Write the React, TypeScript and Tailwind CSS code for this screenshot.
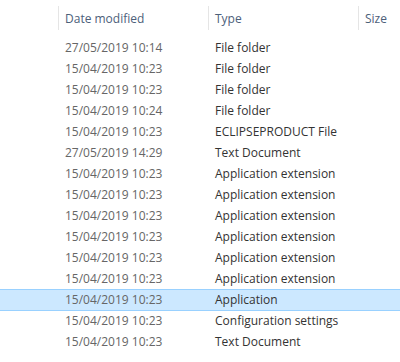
import { FC } from 'react';

interface FileRow {
  date: string;
  type: string;
  selected?: boolean;
}

const rows: FileRow[] = [
  { date: '27/05/2019 10:14', type: 'File folder' },
  { date: '15/04/2019 10:23', type: 'File folder' },
  { date: '15/04/2019 10:23', type: 'File folder' },
  { date: '15/04/2019 10:24', type: 'File folder' },
  { date: '15/04/2019 10:23', type: 'ECLIPSEPRODUCT File' },
  { date: '27/05/2019 14:29', type: 'Text Document' },
  { date: '15/04/2019 10:23', type: 'Application extension' },
  { date: '15/04/2019 10:23', type: 'Application extension' },
  { date: '15/04/2019 10:23', type: 'Application extension' },
  { date: '15/04/2019 10:23', type: 'Application extension' },
  { date: '15/04/2019 10:23', type: 'Application extension' },
  { date: '15/04/2019 10:23', type: 'Application extension' },
  { date: '15/04/2019 10:23', type: 'Application', selected: true },
  { date: '15/04/2019 10:23', type: 'Configuration settings' },
  { date: '15/04/2019 10:23', type: 'Text Document' },
];

const HeaderCell: FC<{ label: string; width: string }> = ({ label, width }) => (
  <div className={`${width} h-full flex items-center`}>
    <div className="w-px h-[24px] bg-[#e5e5e5]" />
    <span className="pl-[6px] pt-[2px] text-[#4c607a]">{label}</span>
  </div>
);

export default function App() {
  return (
    <div
      className="w-[400px] h-[362px] bg-white overflow-hidden text-[12px] leading-none"
      style={{ fontFamily: '"Open Sans", "Noto Sans", sans-serif' }}
    >
      <div className="flex h-[37px] pl-[58px] pb-[1px]">
        <HeaderCell label="Date modified" width="w-[150px]" />
        <HeaderCell label="Type" width="w-[150px]" />
        <HeaderCell label="Size" width="w-[42px]" />
      </div>
      <div className="flex flex-col">
        {rows.map((row, i) => (
          <div
            key={i}
            className={
              row.selected
                ? 'flex items-center h-[22px] -mb-px bg-[#cce8ff] border-y border-[#99d1ff]'
                : 'flex items-center h-[21px]'
            }
          >
            <div className="w-[150px] ml-[58px] pl-[7px] text-[#666666] whitespace-nowrap">{row.date}</div>
            <div className="w-[150px] pl-[7px] text-[#333333] whitespace-nowrap">{row.type}</div>
          </div>
        ))}
      </div>
    </div>
  );
}
